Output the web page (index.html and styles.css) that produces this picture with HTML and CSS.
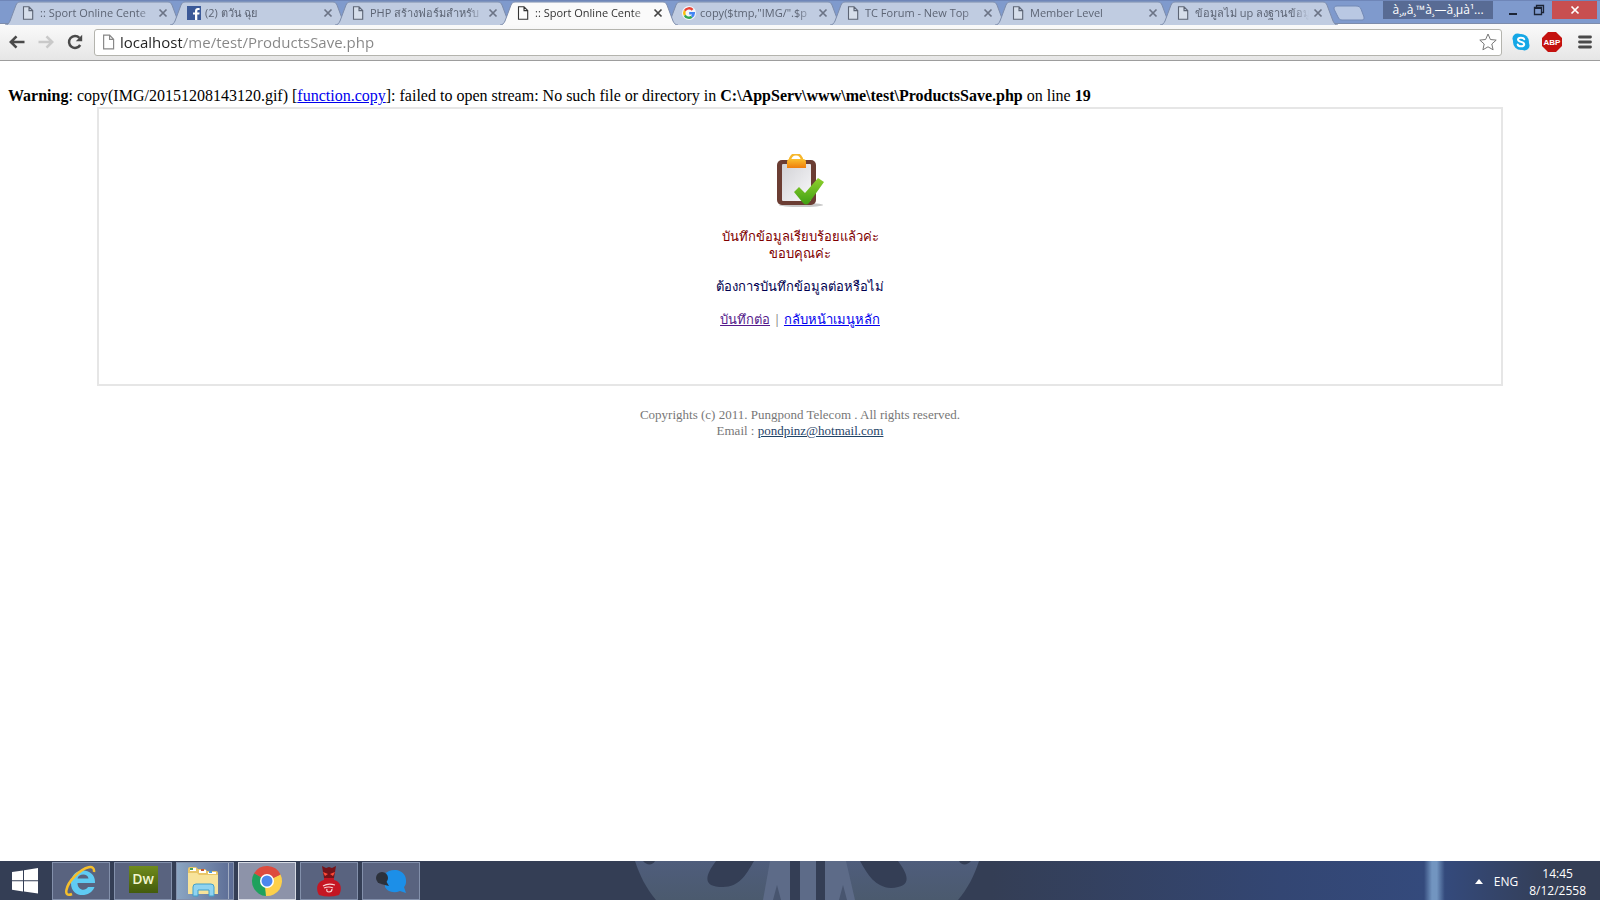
FILE: index.html
```html
<!DOCTYPE html>
<html lang="th">
<head>
    <meta charset="UTF-8" />
    <meta name="viewport" content="width=device-width, initial-scale=1.0">
    <title>:: Sport Online Center ::</title>
    <link rel="stylesheet" href="styles.css">
</head>
<body>
    <!-- Shared shapes -->
    <svg class="defs" width="0" height="0" aria-hidden="true">
        <symbol id="tab-shape" viewBox="0 0 178 24" preserveAspectRatio="none">
            <path d="M0 24 C3 24 4 22 5 20 L11 4 C12 2 13 1 15 1 H163 C165 1 166 2 167 4 L173 20 C174 22 175 24 178 24" />
        </symbol>
        <symbol id="page-icon" viewBox="0 0 12 14">
            <path d="M1.5 .7 H7 L10.7 4.5 V13.3 H1.5 Z M7 .7 V4.6 H10.7" fill="#fff" fill-opacity=".35" stroke="currentColor" stroke-width="1.1" />
        </symbol>
        <symbol id="cross" viewBox="0 0 10 10">
            <path d="M1.5 1.5 L8.5 8.5 M8.5 1.5 L1.5 8.5" stroke="currentColor" stroke-width="1.7" fill="none" />
        </symbol>
    </svg>

    <!-- Tab strip -->
    <header class="tab-strip">
        <div class="tabs">
            <div class="tab">
                <svg class="tab-bg"><use href="#tab-shape" /></svg>
                <svg class="favicon"><use href="#page-icon" /></svg>
                <button class="tab-title">:: Sport Online Cente</button>
                <button class="tab-close" aria-label="Close tab"><svg><use href="#cross" /></svg></button>
            </div>
            <div class="tab">
                <svg class="tab-bg"><use href="#tab-shape" /></svg>
                <svg class="favicon wide" viewBox="0 0 14 14">
                    <rect width="14" height="14" fill="#3b5998" />
                    <path d="M8 14 V8.6 H6 V6.4 H8 V5 C8 3 9.2 2 11 2 H12.6 V4.1 H11.4 C10.6 4.1 10.3 4.5 10.3 5.2 V6.4 H12.6 L12.3 8.6 H10.3 V14 Z" fill="#fff" />
                </svg>
                <button class="tab-title">(2) ตวัน ฉุย</button>
                <button class="tab-close" aria-label="Close tab"><svg><use href="#cross" /></svg></button>
            </div>
            <div class="tab">
                <svg class="tab-bg"><use href="#tab-shape" /></svg>
                <svg class="favicon"><use href="#page-icon" /></svg>
                <button class="tab-title">PHP สร้างฟอร์มสำหรับ</button>
                <button class="tab-close" aria-label="Close tab"><svg><use href="#cross" /></svg></button>
            </div>
            <div class="tab active">
                <svg class="tab-bg"><use href="#tab-shape" /></svg>
                <svg class="favicon"><use href="#page-icon" /></svg>
                <button class="tab-title">:: Sport Online Cente</button>
                <button class="tab-close" aria-label="Close tab"><svg><use href="#cross" /></svg></button>
            </div>
            <div class="tab">
                <svg class="tab-bg"><use href="#tab-shape" /></svg>
                <svg class="favicon wide" viewBox="0 0 14 14" fill="none" stroke-width="2.4">
                    <circle cx="7" cy="7" r="7" fill="#f4f6fa" />
                    <path d="M10.6 3.9 A4.8 4.8 0 0 0 2.8 4.8" stroke="#ea4335" />
                    <path d="M2.8 4.8 A4.8 4.8 0 0 0 2.8 9.3" stroke="#fbbc05" />
                    <path d="M2.8 9.3 A4.8 4.8 0 0 0 9.8 10.8" stroke="#34a853" />
                    <path d="M9.8 10.8 A4.8 4.8 0 0 0 11.8 7.2 H7.2" stroke="#4285f4" />
                </svg>
                <button class="tab-title">copy($tmp,"IMG/".$p</button>
                <button class="tab-close" aria-label="Close tab"><svg><use href="#cross" /></svg></button>
            </div>
            <div class="tab">
                <svg class="tab-bg"><use href="#tab-shape" /></svg>
                <svg class="favicon"><use href="#page-icon" /></svg>
                <button class="tab-title">TC Forum - New Top</button>
                <button class="tab-close" aria-label="Close tab"><svg><use href="#cross" /></svg></button>
            </div>
            <div class="tab">
                <svg class="tab-bg"><use href="#tab-shape" /></svg>
                <svg class="favicon"><use href="#page-icon" /></svg>
                <button class="tab-title">Member Level</button>
                <button class="tab-close" aria-label="Close tab"><svg><use href="#cross" /></svg></button>
            </div>
            <div class="tab">
                <svg class="tab-bg"><use href="#tab-shape" /></svg>
                <svg class="favicon"><use href="#page-icon" /></svg>
                <button class="tab-title">ข้อมูลไม่ up ลงฐานข้อมู</button>
                <button class="tab-close" aria-label="Close tab"><svg><use href="#cross" /></svg></button>
            </div>
            <button class="new-tab" aria-label="New tab">
                <svg viewBox="0 0 32 16"><path d="M4 1 H23 C26 1 27 2 28 4 L31 12 C31 14 31 15 29 15 H9 C7 15 6 14 5 12 L1 4 C1 2 2 1 4 1 Z" fill="#b9c8e3" stroke="#7389b5" /></svg>
            </button>
        </div>
        <div class="window-controls">
            <button class="profile">à¸„à¸™à¸—à¸µà¹...</button>
            <button class="win-btn" aria-label="Minimize">
                <svg viewBox="0 0 12 12"><path d="M2 10 H10" stroke="#1c2536" stroke-width="2" /></svg>
            </button>
            <button class="win-btn" aria-label="Restore">
                <svg viewBox="0 0 12 12" fill="none" stroke="#1c2536"><path d="M3.5 3 V1.5 H10.5 V8.5 H9" stroke-width="1.3" /><path d="M1.5 3.5 H8.5 V10.5 H1.5 Z" stroke-width="1.3" /><path d="M1 4 H9" stroke-width="2" /></svg>
            </button>
            <button class="win-btn close" aria-label="Close"><svg><use href="#cross" /></svg></button>
        </div>
    </header>

    <!-- Toolbar -->
    <nav class="toolbar">
        <button class="nav-btn" aria-label="Back">
            <svg viewBox="0 0 16 16"><path d="M15.5 8 H2 M7.5 2.3 L1.8 8 L7.5 13.7" fill="none" stroke="#4a4a4a" stroke-width="2.6" /></svg>
        </button>
        <button class="nav-btn" aria-label="Forward">
            <svg viewBox="0 0 16 16"><path d="M.5 8 H14 M8.5 2.3 L14.2 8 L8.5 13.7" fill="none" stroke="#c9c9c9" stroke-width="2.6" /></svg>
        </button>
        <button class="nav-btn" aria-label="Reload">
            <svg viewBox="0 0 16 16"><path d="M13.2 11 A6 6 0 1 1 12.4 3.8" fill="none" stroke="#4a4a4a" stroke-width="2.5" /><path d="M15.2 .8 V7.2 H8.8 Z" fill="#4a4a4a" /></svg>
        </button>
        <div class="address-bar">
            <svg class="page-mark"><use href="#page-icon" /></svg>
            <input class="address" type="text" aria-label="Address" value="localhost/me/test/ProductsSave.php">
            <button class="star" aria-label="Bookmark this page">
                <svg viewBox="0 0 18 18"><path d="M9 1 L11.4 6.5 L17.2 7.1 L12.8 11 L14.1 16.8 L9 13.8 L3.9 16.8 L5.2 11 L.8 7.1 L6.6 6.5 Z" fill="#fff" stroke="#777" stroke-linejoin="round" /></svg>
            </button>
        </div>
        <button class="ext-btn" aria-label="Skype">
            <svg viewBox="0 0 18 18">
                <circle cx="5.5" cy="5.5" r="5" fill="#15a7e6" /><circle cx="12.5" cy="12.5" r="5" fill="#15a7e6" /><circle cx="9" cy="9" r="8" fill="#15a7e6" />
                <path d="M12.2 6.3 C11.5 4.2 6 4 6 6.6 C6 9.6 12.2 8.2 12.2 11.2 C12.2 14 6.3 13.9 5.7 11.4" fill="none" stroke="#fff" stroke-width="2" stroke-linecap="round" />
            </svg>
        </button>
        <button class="ext-btn abp" aria-label="Adblock Plus">ABP</button>
        <button class="ext-btn menu" aria-label="Menu">
            <svg viewBox="0 0 14 14"><path d="M1.5 2 H12.5 M1.5 7 H12.5 M1.5 12 H12.5" stroke="#4a4a4a" stroke-width="2.8" stroke-linecap="round" /></svg>
        </button>
    </nav>

    <!-- Page content -->
    <main class="page">
        <p class="warning"><b>Warning</b>: copy(IMG/20151208143120.gif) [<a href="function.copy">function.copy</a>]: failed to open stream: No such file or directory in <b>C:\AppServ\www\me\test\ProductsSave.php</b> on line <b>19</b></p>

        <section class="result">
            <svg class="clipboard" viewBox="0 0 50 54">
                <defs>
                    <linearGradient id="clip" x1="0" y1="0" x2="0" y2="1"><stop offset="0" stop-color="#fbc02d" /><stop offset="1" stop-color="#ee7d0c" /></linearGradient>
                    <linearGradient id="paper" x1="0" y1="0" x2="1" y2="1"><stop offset="0" stop-color="#d2d2d6" /><stop offset="1" stop-color="#f8f8fa" /></linearGradient>
                    <linearGradient id="tick" x1="0" y1="0" x2="0" y2="1"><stop offset="0" stop-color="#8fd02c" /><stop offset="1" stop-color="#3f9f13" /></linearGradient>
                </defs>
                <ellipse cx="26" cy="51" rx="22" ry="2" fill="#c8c8c8" />
                <rect x="2" y="6" width="39" height="45" rx="5" fill="#6b3d33" />
                <rect x="7" y="10" width="29" height="37" rx="1" fill="url(#paper)" />
                <path d="M15 7 C15 -2 27 -2 27 7" fill="none" stroke="#f6b62b" stroke-width="2.5" />
                <path d="M12 14 V8 C12 6 13 5 15 5 H28 C30 5 31 6 31 8 V14 Z" fill="url(#clip)" />
                <path d="M19 38 L24 33 L30 39 L43 24 L49 28 L34 49 C32 51 30 51 28 49 Z" fill="url(#tick)" />
            </svg>
            <p class="saved">บันทึกข้อมูลเรียบร้อยแล้วค่ะ<br>ขอบคุณค่ะ</p>
            <p class="question">ต้องการบันทึกข้อมูลต่อหรือไม่</p>
            <p class="links"><a class="visited" href="ProductsAdd.php">บันทึกต่อ</a> | <a href="index.php">กลับหน้าเมนูหลัก</a></p>
        </section>

        <footer class="copyright">
            Copyrights (c) 2011. Pungpond Telecom . All rights reserved.<br>
            Email : <a href="mailto:pondpinz@hotmail.com">pondpinz@hotmail.com</a>
        </footer>
    </main>

    <!-- Taskbar -->
    <div class="taskbar">
        <svg class="wheel" viewBox="0 0 344 39" aria-hidden="true">
            <defs><linearGradient id="rim" x1="0" y1="0" x2="0" y2="1"><stop offset="0" stop-color="#4f5d7c" /><stop offset="1" stop-color="#4b5a6e" /></linearGradient></defs>
            <path d="M0 0 H344 C339 15 333 27 323 39 H21 C11 27 5 15 0 0 Z" fill="url(#rim)" />
            <path d="M8 0 H20 C18 4 12 5 8 0 Z M324 0 H336 C332 5 326 4 324 0 Z" fill="#343e55" />
            <path d="M81 0 H119 C111 14 104 26 88 26 C68 26 69 16 81 0 Z M225 0 H263 C275 16 276 26 256 27 C240 26 233 14 225 0 Z" fill="#343e55" />
            <path d="M135 0 H211 L220 39 H128 Z" fill="#5d6b88" />
            <path d="M138 39 L142 24 L146 39 Z M204 39 L208 24 L212 39 Z" fill="#48556f" />
            <path d="M155 0 H165 V39 H155 Z M181 0 H190 V39 H181 Z" fill="#343e55" />
        </svg>
        <button class="start" aria-label="Start">
            <svg viewBox="0 0 26 26"><path d="M0 4 L11 2.400 V12.300 H0 Z M12 2.200 L26 0 V12.300 H12 Z M0 13.300 H11 V23.400 L0 21.800 Z M12 13.300 H26 V25.600 L12 23.600 Z" fill="#fff" /></svg>
        </button>
        <div class="apps">
            <button class="app" aria-label="Internet Explorer">
                <svg viewBox="0 0 32 32">
                    <path d="M30 18 H12.500 C12.500 25 20 27 23 22 H29.500 C25 34 5 33 6 17 C7 1 31 2 30 18 Z M12.500 13.500 H23.500 C23 8 13.500 8 12.500 13.500 Z" fill="#5fcbf3" fill-rule="evenodd" />
                    <path d="M7 29 C-2 33 0 21 10 11 C20 1 30 -1 29 7" fill="none" stroke="#f5bf2c" stroke-width="2.500" />
                </svg>
            </button>
            <button class="app" aria-label="Dreamweaver"><span class="dw">Dw</span></button>
            <button class="app stacked" aria-label="File Explorer">
                <svg viewBox="0 0 32 32">
                    <path d="M1 4 Q1 2 3 2 H9 L11 4 H18 L20 6 H29 Q31 6 31 8 V29 H1 Z" fill="#e9c668" />
                    <path d="M3 3 H9 V6 H3 Z M12 5 H19 V8 H12 Z M21 7 H29 V9 H21 Z" fill="#fff" />
                    <path d="M3 3 H6 V5 H3 Z" fill="#49a058" /><path d="M14 4 H17 V6 H14 Z" fill="#c8542f" /><path d="M22 6 H25 V8 H22 Z" fill="#4b9bd6" />
                    <path d="M1 8 H10 L12 10 H31 V29 H1 Z" fill="#f7e39a" />
                    <path d="M6 31 V22 Q6 19 9 19 H24 Q27 19 27 22 V31 H22 V25 H11 V31 Z" fill="#8fd3f0" stroke="#3f9fcb" />
                </svg>
            </button>
            <button class="app current" aria-label="Chrome">
                <svg viewBox="0 0 32 32">
                    <path d="M16 16 L3 8.500 A15 15 0 0 1 29.500 9.500 Z" fill="#dd4b3e" />
                    <path d="M16 16 L15 31 A15 15 0 0 1 3 8.500 Z" fill="#1fa15d" />
                    <path d="M16 16 L29.500 9.500 A15 15 0 0 1 15 31 Z" fill="#fdd04a" />
                    <path d="M16 9.500 H29.500 L16 16 Z" fill="#dd4b3e" /><path d="M3 8.500 L10 20 L16 16 Z" fill="#1fa15d" /><path d="M22 19 L15 31 L14 22 Z" fill="#fdd04a" />
                    <circle cx="16" cy="16" r="7" fill="#fff" /><circle cx="16" cy="16" r="5.500" fill="#4b87ee" />
                </svg>
            </button>
            <button class="app" aria-label="Garena">
                <svg viewBox="0 0 32 32">
                    <path d="M9 1 L13 3 L16 2 L19 3 L23 1 L21 13 H11 Z" fill="#761319" />
                    <path d="M10 7 L15 9 L12 11 Z M22 7 L17 9 L20 11 Z" fill="#ff4b36" />
                    <path d="M11 13 H21 L21 15 C29 17 29 25 26 30 Q16 33 6 30 C3 25 3 17 11 15 Z" fill="#c51623" />
                    <path d="M10 21 Q15 18 22 20 M11 23 Q16 21 20 23 M19 24 Q19 27 16 27 Q13 27 14 24" fill="none" stroke="#fbd6d6" stroke-width="1.200" />
                </svg>
            </button>
            <button class="app" aria-label="Messenger">
                <svg viewBox="0 0 32 32">
                    <path d="M10 9 C14 4 26 3 30 11 C32 16 31 20 29 22 L31 28 L25 26 C18 29 12 26 10 22 Z" fill="#1c8fe8" />
                    <circle cx="7" cy="13" r="6" fill="#2c313b" /><path d="M11 16 L14 21 L6 19 Z" fill="#2c313b" />
                </svg>
            </button>
        </div>
        <div class="tray">
            <button class="tray-btn" aria-label="Show hidden icons"><svg viewBox="0 0 8 5"><path d="M0 5 L4 0 L8 5 Z" fill="#fff" /></svg></button>
            <button class="tray-btn">ENG</button>
            <button class="tray-btn clock">14:45<br>8/12/2558</button>
        </div>
    </div>
</body>
</html>
```
FILE: styles.css
```css
:root {
    --frame: #7f9acd;
    --tab: #c0cce1;
    --tab-line: #7d8cab;
    --ui-font: "Open Sans", "Noto Sans", sans-serif;
    --bar: #343e55;
}

* {
    box-sizing: border-box;
}

body {
    margin: 0;
    min-height: 100vh;
    display: flex;
    flex-direction: column;
    background-color: #fff;
    font-family: "Liberation Serif", serif;
    font-size: 16px;
}

button {
    padding: 0;
    border: 0;
    background: none;
    color: inherit;
    font-family: var(--ui-font);
}

svg {
    display: block;
}

.defs {
    position: absolute;
}

/* Tab strip */
.tab-strip {
    display: flex;
    justify-content: space-between;
    height: 24px;
    background-color: var(--frame);
    border-top: 1px solid #6f86b8;
    box-shadow: inset 0 -1px var(--tab-line);
    font-family: var(--ui-font);
}

.tabs {
    display: flex;
    flex: 1;
    min-width: 0;
    padding-left: 5px;
}

.tab {
    position: relative;
    display: flex;
    align-items: center;
    flex: 0 1 165px;
    min-width: 0;
    height: 24px;
    padding: 0 2px 0 17px;
    color: #5c6474;
    isolation: isolate;
}

.tab-bg {
    position: absolute;
    top: 0;
    left: 0;
    z-index: -1;
    width: calc(100% + 13px);
    height: 24px;
    fill: var(--tab);
    stroke: var(--tab-line);
}

.tab.active {
    z-index: 1;
    color: #333;
}

.tab.active .tab-bg {
    fill: #fafafa;
}

.favicon {
    flex: none;
    width: 12px;
    height: 14px;
    margin-right: 6px;
}

.favicon.wide {
    width: 14px;
    margin-right: 4px;
}

.tab-title {
    flex: 1;
    min-width: 0;
    overflow: hidden;
    text-align: left;
    font-size: 11px;
    line-height: 22px;
    white-space: nowrap;
    -webkit-mask-image: linear-gradient(to left, transparent, #000 16px);
    mask-image: linear-gradient(to left, transparent, #000 16px);
}

.tab-close {
    flex: none;
    margin-left: 4px;
    color: #6b7385;
}

.active .tab-close {
    color: #444;
}

.tab-close svg {
    width: 10px;
    height: 10px;
}

.new-tab {
    flex: none;
    margin-left: 8px;
}

.new-tab svg {
    width: 32px;
    height: 16px;
}

.window-controls {
    display: flex;
    align-items: flex-start;
    padding-right: 3px;
}

.profile {
    width: 110px;
    height: 18px;
    margin-right: 7px;
    background-color: #586b94;
    color: #fff;
    font-size: 12px;
    line-height: 16px;
    white-space: nowrap;
}

.win-btn {
    display: flex;
    align-items: center;
    justify-content: center;
    width: 26px;
    height: 18px;
}

.win-btn svg {
    width: 12px;
    height: 12px;
}

.win-btn.close {
    width: 45px;
    background-color: #c84f50;
    color: #fff;
}

.win-btn.close svg {
    width: 10px;
    height: 10px;
}

/* Toolbar */
.toolbar {
    display: flex;
    align-items: center;
    height: 37px;
    padding: 0 8px 0 9px;
    background: linear-gradient(#fafafa, #e6e6e6);
    border-bottom: 1px solid #9d9d9d;
}

.nav-btn {
    margin-right: 13px;
}

.nav-btn svg {
    width: 16px;
    height: 16px;
}

.nav-btn:nth-of-type(3) {
    margin-right: 11px;
}

.address-bar {
    display: flex;
    align-items: center;
    flex: 1;
    height: 27px;
    padding: 0 4px 0 7px;
    background-color: #fff;
    border: 1px solid #b4b4ae;
    border-radius: 3px;
}

.page-mark {
    width: 13px;
    height: 16px;
    color: #888;
}

.address {
    flex: 1;
    min-width: 0;
    height: 25px;
    padding: 0 0 0 5px;
    border: 0;
    outline: none;
    background: linear-gradient(to right, #222 67px, #858585 67px);
    -webkit-background-clip: text;
    background-clip: text;
    color: transparent;
    font-family: var(--ui-font);
    font-size: 15px;
}

.star svg {
    width: 18px;
    height: 18px;
}

.ext-btn {
    margin-left: 10px;
}

.ext-btn svg {
    width: 18px;
    height: 18px;
}

.ext-btn.abp {
    width: 20px;
    height: 20px;
    margin-left: 12px;
    background-color: #c4120f;
    clip-path: polygon(30% 0, 70% 0, 100% 30%, 100% 70%, 70% 100%, 30% 100%, 0 70%, 0 30%);
    color: #fff;
    font-family: "Liberation Sans", sans-serif;
    font-size: 8px;
    font-weight: 700;
}

.ext-btn.menu {
    margin-left: 16px;
}

.ext-btn.menu svg {
    width: 14px;
    height: 14px;
}

/* Page content */
.page {
    flex: 1;
    padding: 25px 8px 8px;
}

.page a {
    color: #00e;
}

.warning {
    margin: 0 0 2px;
    line-height: 19px;
}

.result {
    display: flex;
    flex-direction: column;
    align-items: center;
    max-width: 1406px;
    min-height: 278px;
    margin: 0 auto;
    padding: 45px 20px 40px;
    border: 2px solid #e6e6e6;
    text-align: center;
    font-family: "Open Sans", "Noto Sans", sans-serif;
    font-size: 13px;
    line-height: 17px;
}

.result p {
    margin: 0 0 16px;
}

.result .clipboard {
    width: 50px;
    height: 54px;
    margin-bottom: 20px;
}

.saved {
    color: #800000;
}

.question {
    color: #000050;
}

.links {
    color: #888;
}

.page .visited {
    color: #551a8b;
}

.copyright {
    margin-top: 21px;
    text-align: center;
    color: #777;
    font-size: 13px;
    line-height: 16px;
}

.page .copyright a {
    color: #1f4468;
}

/* Taskbar */
.taskbar {
    position: relative;
    display: flex;
    height: 39px;
    background: linear-gradient(to right, var(--bar) 0, var(--bar) 62%, #334673 80%, #344a7c 89%, #7295c0 89.5%, #7295c0 89.8%, #344a7c 90.3%, var(--bar) 97%);
    color: #fff;
}

.wheel {
    position: absolute;
    top: 0;
    left: calc(50% - 165px);
    width: 344px;
    height: 39px;
}

.start {
    display: flex;
    align-items: center;
    justify-content: center;
    width: 50px;
}

.start svg {
    width: 26px;
    height: 26px;
}

.apps {
    display: flex;
    gap: 4px;
    padding: 1px 0 0 2px;
}

.app {
    display: flex;
    align-items: center;
    justify-content: center;
    width: 58px;
    height: 38px;
    background-color: #59637f;
    border: 1px solid #8390ab;
}

.app svg {
    width: 32px;
    height: 32px;
}

.app.stacked {
    position: relative;
    padding-right: 4px;
    background: linear-gradient(to right, #8ba5c2, #5b6b94);
}

.app.stacked::after {
    content: "";
    position: absolute;
    top: 0;
    right: 4px;
    bottom: 0;
    border-right: 1px solid #a1acc2;
}

.app.current {
    background-color: #8d93a9;
    border-color: #d5d9e3;
}

.dw {
    width: 29px;
    height: 27px;
    margin-bottom: 4px;
    background: linear-gradient(#6f8b1d, #435b0c);
    color: #f2f7d0;
    font-size: 14px;
    font-weight: 600;
    line-height: 25px;
}

.tray {
    display: flex;
    align-items: center;
    gap: 11px;
    margin-left: auto;
    padding: 2px 14px 0 0;
}

.tray-btn {
    font-size: 12px;
    line-height: 17px;
}

.tray-btn svg {
    width: 8px;
    height: 5px;
}
```
